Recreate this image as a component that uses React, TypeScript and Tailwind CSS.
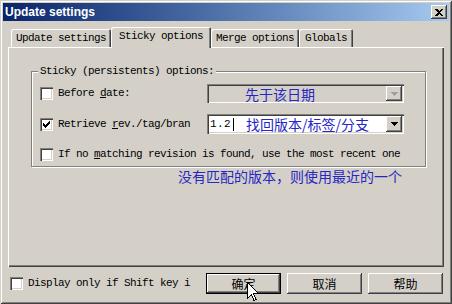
import React from 'react';

const mono = "font-['Liberation_Mono','Noto_Sans_CJK_SC',monospace] text-[11px] tracking-[-0.6px] text-black";
const cjkBlue = "font-['Noto_Sans_CJK_SC',sans-serif] text-[14px] leading-[16px] text-[#2626c4]";
const raised =
  'shadow-[inset_-1px_-1px_#404040,inset_1px_1px_#fff,inset_-2px_-2px_#808080]';
const sunken =
  'shadow-[inset_1px_1px_#808080,inset_2px_2px_#404040,inset_-1px_-1px_#fff,inset_-2px_-2px_#d4d0c8]';

function Check({ checked }: { checked?: boolean }) {
  return (
    <div className={`flex h-[13px] w-[13px] shrink-0 items-center justify-center bg-white ${sunken}`}>
      {checked && (
        <svg width="7" height="7" viewBox="0 0 7 7" shapeRendering="crispEdges">
          <path d="M0 2h1v1h1v1h1V3h1V2h1V1h1V0h1v3H6v1H5v1H4v1H3v1H2V6H1V5H0z" fill="#000" />
        </svg>
      )}
    </div>
  );
}

function DropButton({ disabled }: { disabled?: boolean }) {
  return (
    <div className={`flex h-full w-[16px] items-center justify-center bg-[#d4d0c8] ${raised}`}>
      <svg width="7" height="4" viewBox="0 0 7 4" shapeRendering="crispEdges">
        <path d="M0 0h7L3.5 4z" fill={disabled ? '#a0a0a0' : '#000'} />
      </svg>
    </div>
  );
}

function Tab({ label, width, active }: { label: string; width: string; active?: boolean }) {
  return (
    <div
      className={`flex items-center justify-center rounded-t-[2px] bg-[#d4d0c8] shadow-[inset_1px_1px_#fff,inset_-1px_0_#404040,inset_-2px_0_#808080] ${width} ${
        active ? 'relative z-10 -mb-[1px] h-[21px] pb-[3px]' : 'h-[18px] pt-[1px]'
      }`}
    >
      <span className={mono}>{label}</span>
    </div>
  );
}

function Button({ label, isDefault }: { label: string; isDefault?: boolean }) {
  return (
    <div
      className={`flex h-[21px] w-[75px] items-center justify-center bg-[#d4d0c8] font-['Noto_Sans_CJK_SC',sans-serif] text-[12px] text-black ${
        isDefault
          ? 'shadow-[inset_0_0_0_1px_#000,inset_-2px_-2px_#404040,inset_2px_2px_#fff,inset_-3px_-3px_#808080]'
          : raised
      }`}
    >
      {label}
    </div>
  );
}

export default function App() {
  return (
    <div className="relative flex h-[304px] w-[452px] flex-col bg-[#d4d0c8] p-[3px] shadow-[inset_1px_1px_#d4d0c8,inset_-1px_-1px_#404040,inset_2px_2px_#fff,inset_-2px_-2px_#808080]">
      {/* title bar */}
      <div className="flex h-[18px] items-center justify-between bg-linear-to-r from-[#0a246a] to-[#a6caf0] pl-[2px] pr-[2px]">
        <span className="font-['Liberation_Sans',Arial,sans-serif] text-[12px] font-bold text-white">
          Update settings
        </span>
        <div className={`flex h-[14px] w-[16px] items-center justify-center bg-[#d4d0c8] ${raised}`}>
          <svg width="8" height="7" viewBox="0 0 8 7" shapeRendering="crispEdges">
            <path d="M0 0h2l2 2 2-2h2L5 3.5 8 7H6L4 5 2 7H0l3-3.5z" fill="#000" />
          </svg>
        </div>
      </div>

      <div className="flex flex-col px-[5px]">
        {/* tabs */}
        <div className="mt-[6px] flex h-[20px] items-end pl-[3px]">
          <Tab label="Update settings" width="w-[100px]" />
          <Tab label="Sticky options" width="w-[100px]" active />
          <Tab label="Merge options" width="w-[88px]" />
          <Tab label="Globals" width="w-[54px]" />
        </div>

        {/* tab panel */}
        <div className="flex h-[220px] w-[436px] flex-col shadow-[inset_1px_1px_#fff,inset_-1px_-1px_#404040,inset_-2px_-2px_#808080]">
          <div className="relative ml-[23px] mt-[24px] flex h-[96px] w-[395px] flex-col border border-[#808080] pl-[8px] pt-[12px] shadow-[1px_1px_#fff,inset_1px_1px_#fff]">
            <span className={`absolute -top-[7px] left-[6px] bg-[#d4d0c8] px-[2px] leading-[12px] ${mono}`}>
              Sticky (persistents) options:
            </span>

            <div className="flex h-[19px] items-center">
              <Check />
              <span className={`ml-[5px] w-[149px] ${mono}`}>
                Before <u className="underline-offset-1">d</u>ate:
              </span>
              <div className={`flex h-[19px] w-[197px] items-center bg-[#d4d0c8] p-[2px] ${sunken}`}>
                <span className={`ml-[36px] flex-1 ${cjkBlue}`}>先于该日期</span>
                <DropButton disabled />
              </div>
            </div>

            <div className="mt-[11px] flex h-[20px] items-center">
              <Check checked />
              <span className={`ml-[5px] w-[149px] ${mono}`}>
                Retrieve <u className="underline-offset-1">r</u>ev./tag/bran
              </span>
              <div className={`flex h-[20px] w-[197px] items-center bg-white p-[2px] ${sunken}`}>
                <span className={`ml-[1px] tracking-[0.4px] ${mono}`}>1.2</span>
                <span className="ml-[2px] h-[13px] w-[1px] bg-black" />
                <span className={`ml-[12px] flex-1 ${cjkBlue}`}>找回版本/标签/分支</span>
                <DropButton />
              </div>
            </div>

            <div className="mt-[14px] flex h-[13px] items-center">
              <Check />
              <span className={`ml-[5px] ${mono}`}>
                If no <u className="underline-offset-1">m</u>atching revision is found, use the most recent one
              </span>
            </div>
          </div>

          <div className={`ml-[170px] mt-[1px] ${cjkBlue}`}>没有匹配的版本，则使用最近的一个</div>
        </div>

        {/* bottom */}
        <div className="mt-[6px] flex h-[21px] items-center">
          <div className="ml-[2px]">
            <Check />
          </div>
          <span className={`ml-[5px] ${mono}`}>Display only if Shift key i</span>
          <div className="ml-auto mr-[1px] flex gap-[6px]">
            <Button label="确定" isDefault />
            <Button label="取消" />
            <Button label="帮助" />
          </div>
        </div>
      </div>

      {/* mouse pointer */}
      <svg
        className="absolute left-[247px] top-[282px]"
        width="12"
        height="20"
        viewBox="0 0 12 20"
        shapeRendering="crispEdges"
      >
        <path d="M0.5 0.5V16.5L4.5 12.5L7 18.5L9 17.5L6.5 11.5H11.5Z" fill="#fff" stroke="#000" strokeWidth="1" />
      </svg>
    </div>
  );
}
